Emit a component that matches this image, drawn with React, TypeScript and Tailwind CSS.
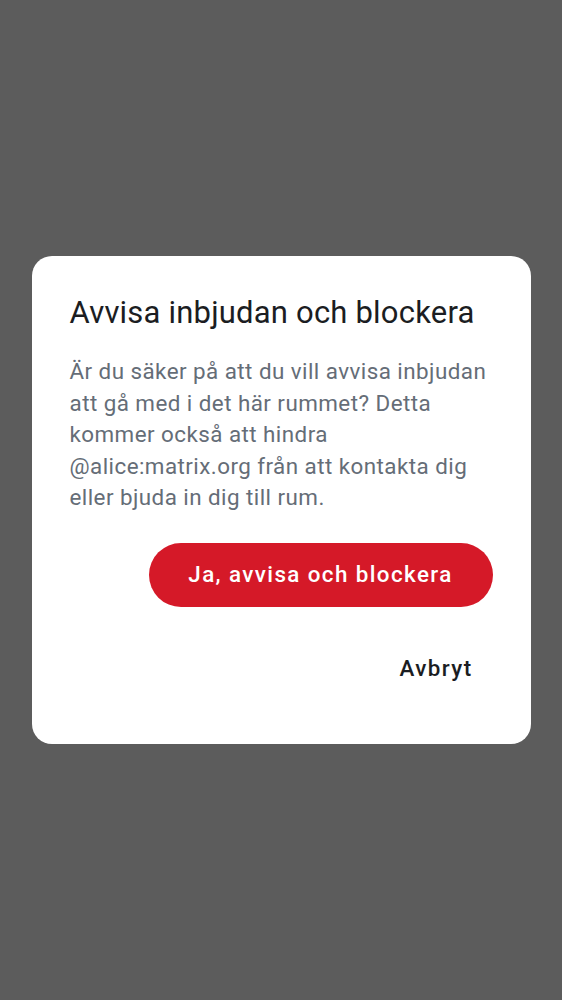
export default function App() {
  return (
    <div className="w-[562px] h-[1000px] bg-[#5c5c5c] flex items-center justify-center" style={{ fontFamily: "Roboto, 'Noto Sans', sans-serif" }}>
      <div className="w-[499px] h-[488px] bg-white rounded-[20px] px-[38px] pt-[37px] flex flex-col">
        <h1 className="text-[31px] leading-[40px] tracking-[0.2px] text-[#1b1d22] font-normal">Avvisa inbjudan och blockera</h1>
        <p className="mt-[23px] text-[22.4px] leading-[31.5px] tracking-[0.45px] text-[#656d77]">
          Är du säker på att du vill avvisa inbjudan att gå med i det här rummet? Detta kommer också att hindra @alice:matrix.org från att kontakta dig eller bjuda in dig till rum.
        </p>
        <div className="mt-[29px] flex justify-end">
          <button className="h-[64px] w-[344px] rounded-full bg-[#d51928] text-white text-[22.4px] tracking-[1.4px] font-medium">
            Ja, avvisa och blockera
          </button>
        </div>
        <div className="mt-[30px] flex justify-end">
          <button className="h-[64px] px-[20px] text-[22.4px] tracking-[1.4px] font-medium text-[#1b1d22]">
            Avbryt
          </button>
        </div>
      </div>
    </div>
  );
}
